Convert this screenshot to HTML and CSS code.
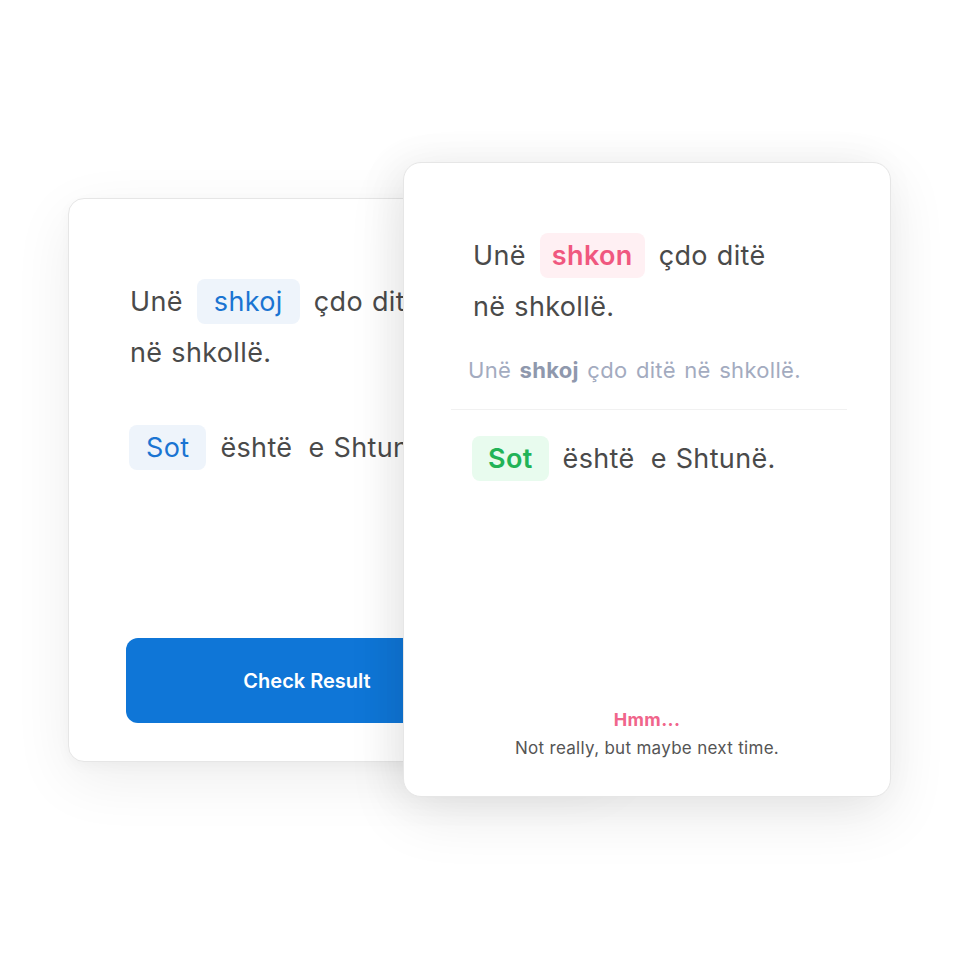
FILE: index.html
```html
<!DOCTYPE html>
<html lang="sq">
<head>
<meta charset="utf-8">
<title>Quiz</title>
<link rel="stylesheet" href="styles.css">
</head>
<body>
<div class="stage">
  <section class="card card-left">
    <div class="sentence">
      <span class="w">Unë</span>
      <span class="chip chip-blue">shkoj</span>
      <span class="w">çdo ditë</span>
      <span class="w">në shkollë.</span>
    </div>
    <div class="sentence sentence-second">
      <span class="chip chip-blue">Sot</span>
      <span class="w w-wide">është</span>
      <span class="w">e Shtunë.</span>
    </div>
    <button class="check-btn">Check Result</button>
  </section>

  <section class="card card-right">
    <div class="sentence">
      <span class="w">Unë</span>
      <span class="chip chip-pink">shkon</span>
      <span class="w">çdo ditë</span>
      <span class="w">në shkollë.</span>
    </div>
    <p class="correct">Unë <b>shkoj</b> çdo ditë në shkollë.</p>
    <hr class="divider">
    <div class="sentence">
      <span class="chip chip-green">Sot</span>
      <span class="w w-wide">është</span>
      <span class="w">e Shtunë.</span>
    </div>
    <div class="feedback">
      <div class="fb-title">Hmm...</div>
      <div class="fb-text">Not really, but maybe next time.</div>
    </div>
  </section>
</div>
</body>
</html>
```

FILE: styles.css
```css
* { box-sizing: border-box; }

html, body {
  margin: 0;
  padding: 0;
  background: #ffffff;
}

body {
  font-family: Inter, "Noto Sans", "Liberation Sans", sans-serif;
  color: #4a4a4a;
}

.stage {
  position: relative;
  width: 960px;
  height: 960px;
  padding: 198px 0 0 68px;
}

.card {
  background: #ffffff;
  border: 1px solid #e6e6e6;
  border-radius: 16px;
  box-shadow: 0 18px 60px rgba(0, 0, 0, 0.07), 0 4px 14px rgba(0, 0, 0, 0.03);
}

.card-left {
  width: 544px;
  height: 564px;
  display: flex;
  flex-direction: column;
  padding: 77px 0 38px 61px;
}

.card-right {
  position: absolute;
  left: 403px;
  top: 162px;
  width: 488px;
  height: 635px;
  display: flex;
  flex-direction: column;
  padding: 67px 0 36px 69px;
  border-radius: 18px;
  box-shadow: 0 18px 60px rgba(0, 0, 0, 0.09), -10px 0 40px rgba(0, 0, 0, 0.05);
}

.sentence {
  display: flex;
  flex-wrap: wrap;
  align-items: center;
  column-gap: 12px;
  max-width: 330px;
  font-size: 27px;
  line-height: 51px;
  letter-spacing: 0.35px;
  word-spacing: 1px;
}

.w-wide {
  margin-right: 4px;
}

.sentence-second {
  margin-top: 44px;
}

.chip {
  display: inline-flex;
  align-items: center;
  height: 45px;
  padding: 0 17px;
  margin: 0 2px;
  border-radius: 8px;
}

.chip:first-child {
  margin-left: -1px;
}

.chip-blue {
  background: #eef4fb;
  color: #1a74d2;
}

.chip-pink {
  background: #fff0f3;
  color: #f0587f;
  font-weight: 600;
  padding: 0 12px;
}

.chip-green {
  background: #e8fbee;
  color: #22b357;
  font-weight: 600;
  padding: 0 16px;
}

.check-btn {
  margin-top: auto;
  margin-left: -4px;
  width: 362px;
  height: 85px;
  border: none;
  border-radius: 12px;
  background: #0f76d7;
  color: #ffffff;
  font-family: inherit;
  font-size: 20px;
  font-weight: 600;
  padding: 0;
}

.correct {
  margin: 24px 0 0 -5px;
  font-size: 22px;
  line-height: 28px;
  letter-spacing: 0.3px;
  word-spacing: 2px;
  color: #a3abbf;
}

.correct b {
  font-weight: 700;
  color: #8f98ad;
}

.divider {
  border: none;
  border-top: 1px solid #f1f1f1;
  margin: 25px 43px 0 -22px;
  height: 0;
}

.divider + .sentence {
  margin-top: 23px;
}

.feedback {
  margin-top: auto;
  margin-left: -69px;
  text-align: center;
}

.fb-title {
  font-size: 18px;
  line-height: 24px;
  font-weight: 700;
  letter-spacing: 0.4px;
  color: #f0658b;
}

.fb-text {
  margin-top: 4px;
  font-size: 17px;
  line-height: 24px;
  letter-spacing: 0.3px;
  color: #555555;
}
```
